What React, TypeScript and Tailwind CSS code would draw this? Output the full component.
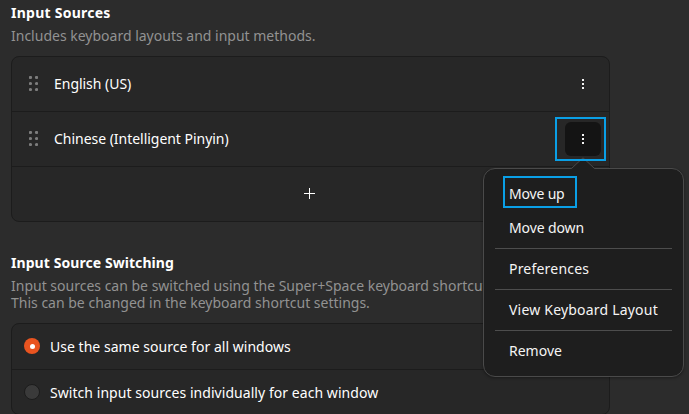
import React from "react";

function DragHandle() {
  return (
    <svg className="mb-px" width="9" height="15" viewBox="0 0 9 15" fill="#7d7d7d">
      {[1.5, 7.5].map((x) =>
        [1.5, 7.5, 13.5].map((y) => <circle key={`${x}-${y}`} cx={x} cy={y} r="1.6" />),
      )}
    </svg>
  );
}

function MoreIcon() {
  return (
    <svg width="2" height="10" viewBox="0 0 2 10" fill="#f2f2f2" shapeRendering="crispEdges">
      <path d="M0 0h2v2H0zM0 4h2v2H0zM0 8h2v2H0z" />
    </svg>
  );
}

function Separator() {
  return <div className="mx-[11px] h-px bg-[#4d4d4d]" />;
}

function MenuItem({ children, className }: { children: React.ReactNode; className: string }) {
  return <div className={`flex items-center whitespace-nowrap pl-[25px] ${className}`}>{children}</div>;
}

function PopoverMenu() {
  return (
    <div className="absolute -left-[82px] top-[46px] h-[209px] w-[201px] rounded-[12px] border border-[#4a4a4a] bg-[#1e1e1e] pt-[7px] text-[#f5f5f5] shadow-[0_1px_3px_rgba(0,0,0,0.35)]">
      <svg className="absolute left-[87px] -top-[12px]" width="24" height="13" viewBox="0 0 24 13">
        <path d="M0.5 13V11.5L12 0.8L23.5 11.5V13z" fill="#1e1e1e" />
        <path d="M0.5 11.5L12 0.8L23.5 11.5" fill="none" stroke="#4a4a4a" />
      </svg>
      <MenuItem className="relative h-[34px] tracking-[-0.18px]">
        Move up
        <div className="absolute left-[19px] top-0 h-[32px] w-[74px] border-2 border-[#0a9fe6]" />
      </MenuItem>
      <MenuItem className="h-[38px] pb-[4px] tracking-[-0.12px]">Move down</MenuItem>
      <Separator />
      <MenuItem className="h-[40px] pb-[2px] tracking-[0.2px]">Preferences</MenuItem>
      <Separator />
      <MenuItem className="h-[40px] pb-[2px] tracking-[0.2px]">View Keyboard Layout</MenuItem>
      <Separator />
      <MenuItem className="h-[40px] pb-[2px]">Remove</MenuItem>
    </div>
  );
}

function SourceRow({ name, open = false }: { name: string; open?: boolean }) {
  return (
    <div className="flex h-[55px] items-center border-b border-[#1c1c1c] pl-[17px] pr-[8px]">
      <DragHandle />
      <span className="ml-[16px] flex-1 pb-[2px] tracking-[-0.03px]">{name}</span>
      <div className={`relative flex h-[34px] w-[36px] items-center justify-center rounded-[6px] ${open ? "bg-[#141414]" : ""}`}>
        <MoreIcon />
        {open && (
          <>
            <PopoverMenu />
            <div className="absolute -left-[10px] -top-[5px] h-[44px] w-[51px] border-2 border-[#0a9fe6]" />
          </>
        )}
      </div>
    </div>
  );
}

function Radio({ checked = false }: { checked?: boolean }) {
  return checked ? (
    <span className="mb-px flex size-4 items-center justify-center rounded-full bg-[#e95420]">
      <span className="size-[5px] rounded-full bg-white" />
    </span>
  ) : (
    <span className="size-4 rounded-full border border-[#1c1c1c] bg-[#3a3a3a]" />
  );
}

export default function App() {
  return (
    <div className="h-[414px] w-[689px] overflow-hidden bg-[#2c2c2c] pl-[11px] pt-[4px] font-['Noto_Sans','Open_Sans',sans-serif] text-[14px] leading-[17px] text-white">
      <section className="w-[599px]">
        <h2 className="font-bold tracking-[0.25px]">Input Sources</h2>
        <p className="mt-[6px] text-[#929292]">Includes keyboard layouts and input methods.</p>
        <div className="mt-[12px] h-[166px] rounded-[8px] border border-[#1c1c1c] bg-[#272727]">
          <SourceRow name="English (US)" />
          <SourceRow name="Chinese (Intelligent Pinyin)" open />
          <div className="flex h-[54px] items-center justify-center pb-px pr-[2px]">
            <svg width="11" height="11" viewBox="0 0 11 11" fill="white" shapeRendering="crispEdges">
              <path d="M5 0h1v5h5v1H6v5H5V6H0V5h5z" />
            </svg>
          </div>
        </div>
      </section>
      <section className="mt-[32px] w-[599px]">
        <h2 className="font-bold tracking-[0.07px]">Input Source Switching</h2>
        <p className="mt-[6px] whitespace-nowrap text-[#929292]">
          Input sources can be switched using the Super+Space keyboard shortcut.
          <br />
          This can be changed in the keyboard shortcut settings.
        </p>
        <div className="mt-[12px] h-[92px] rounded-[8px] border border-[#1c1c1c] bg-[#272727]">
          <div className="flex h-[46px] items-center gap-[10px] border-b border-[#1c1c1c] pl-[12px]">
            <Radio checked />
            <span className="tracking-[0.03px]">Use the same source for all windows</span>
          </div>
          <div className="flex h-[45px] items-center gap-[10px] pb-px pl-[12px]">
            <Radio />
            <span className="tracking-[0.05px]">Switch input sources individually for each window</span>
          </div>
        </div>
      </section>
    </div>
  );
}
